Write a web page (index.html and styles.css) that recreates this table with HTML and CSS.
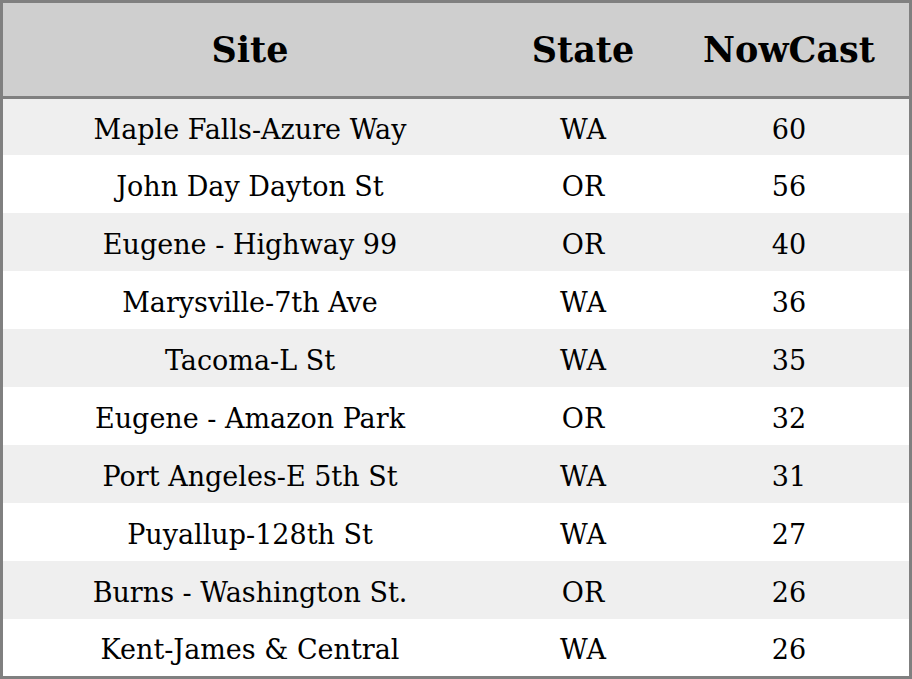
FILE: index.html
```html
<!DOCTYPE html>
<html>
<head>
<meta charset="utf-8">
<link rel="stylesheet" href="styles.css">
</head>
<body>
<table class="aq">
  <colgroup><col class="c-site"><col class="c-state"><col class="c-now"></colgroup>
  <thead>
    <tr><th>Site</th><th>State</th><th>NowCast</th></tr>
  </thead>
  <tbody>
    <tr class="odd first"><td>Maple Falls-Azure Way</td><td>WA</td><td>60</td></tr>
    <tr><td>John Day Dayton St</td><td>OR</td><td>56</td></tr>
    <tr class="odd"><td>Eugene - Highway 99</td><td>OR</td><td>40</td></tr>
    <tr><td>Marysville-7th Ave</td><td>WA</td><td>36</td></tr>
    <tr class="odd"><td>Tacoma-L St</td><td>WA</td><td>35</td></tr>
    <tr><td>Eugene - Amazon Park</td><td>OR</td><td>32</td></tr>
    <tr class="odd"><td>Port Angeles-E 5th St</td><td>WA</td><td>31</td></tr>
    <tr><td>Puyallup-128th St</td><td>WA</td><td>27</td></tr>
    <tr class="odd"><td>Burns - Washington St.</td><td>OR</td><td>26</td></tr>
    <tr class="last"><td>Kent-James &amp; Central</td><td>WA</td><td>26</td></tr>
  </tbody>
</table>
</body>
</html>
```
FILE: styles.css
```css
html, body {
  margin: 0;
  padding: 0;
  background: #ffffff;
}
.aq {
  border-collapse: separate;
  border-spacing: 0;
  width: 912px;
  border: 3px solid #808080;
  table-layout: fixed;
  font-family: "DejaVu Serif", serif;
  color: #000;
}
.c-site { width: 494px; }
.c-state { width: 172px; }
.c-now { width: 240px; }
.aq th {
  height: 93px;
  padding: 0;
  background: #cfcfcf;
  border-bottom: 3px solid #808080;
  font-size: 35px;
  font-weight: bold;
  text-align: center;
  vertical-align: middle;
}
.aq td {
  box-sizing: border-box;
  height: 58px;
  padding: 4px 0 0 0;
  font-size: 27px;
  line-height: 1;
  text-align: center;
  vertical-align: middle;
}
.aq tr.first td { height: 56px; }
.aq tr.last td { height: 57px; }
.aq tr.odd td { background: #efefef; }
```
